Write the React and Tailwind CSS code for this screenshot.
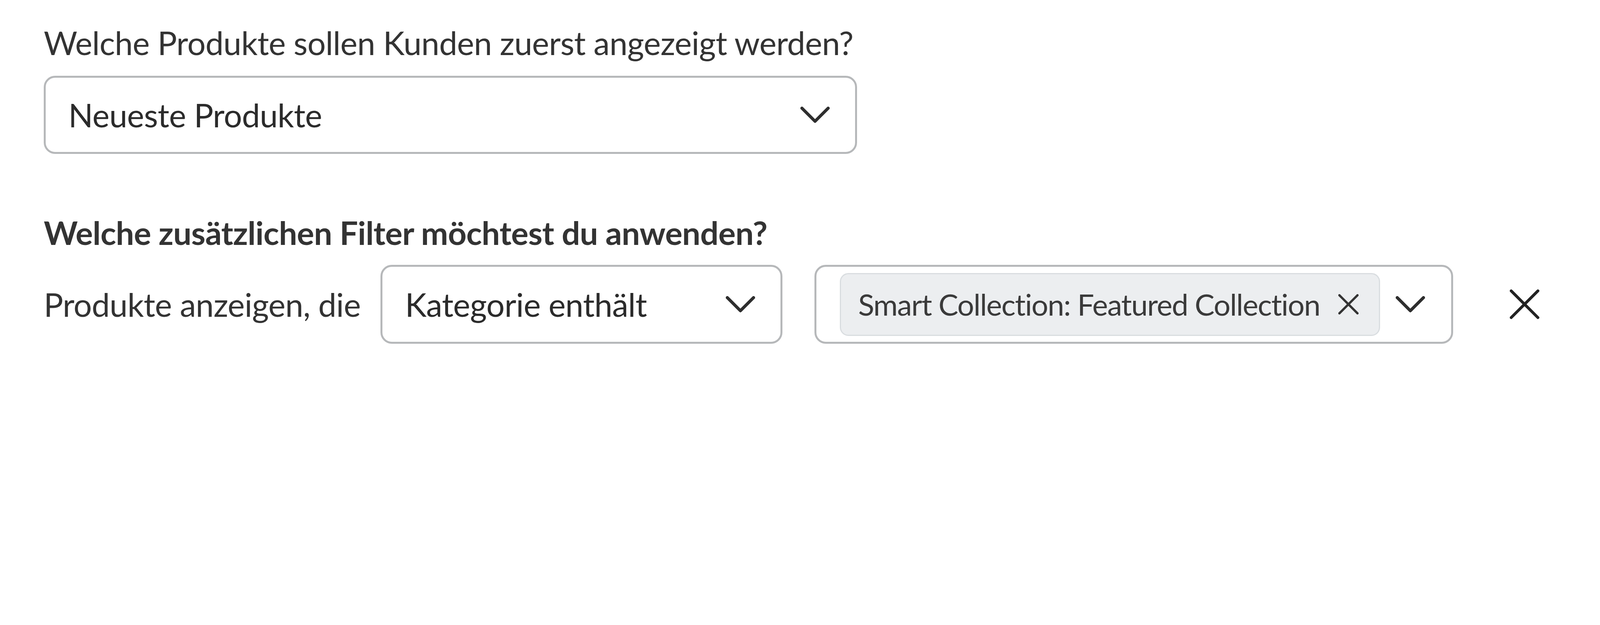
import React from "react";

function Chevron() {
  return (
    <svg width="75" height="41.5" viewBox="0 0 123 68" className="shrink-0">
      <polyline
        points="6.5,6.5 61.5,61.5 116.5,6.5"
        fill="none"
        stroke="#2e2e2e"
        strokeWidth="13"
        strokeLinecap="round"
        strokeLinejoin="round"
      />
    </svg>
  );
}

function Cross({ size, box, stroke, color }) {
  const a = stroke / 2;
  const b = box - stroke / 2;
  return (
    <svg width={size} height={size} viewBox={`0 0 ${box} ${box}`} className="shrink-0">
      <line x1={a} y1={a} x2={b} y2={b} stroke={color} strokeWidth={stroke} strokeLinecap="round" />
      <line x1={b} y1={a} x2={a} y2={b} stroke={color} strokeWidth={stroke} strokeLinecap="round" />
    </svg>
  );
}

export default function App() {
  return (
    <div className="min-h-screen w-full bg-white text-[#333333] pl-[112px] pt-[59px] font-['Lato','Noto_Sans',sans-serif]">
      <div className="text-[83px] leading-[100px] tracking-[-0.64px] whitespace-nowrap">
        Welche Produkte sollen Kunden zuerst angezeigt werden?
      </div>

      <div className="mt-[35px] w-[2082px] h-[200px] border-[5.5px] border-[#b6b8ba] rounded-[29px] bg-white flex items-center pl-[58px] pr-[65px]">
        <span className="flex-1 text-[83px] leading-none tracking-[-0.64px] text-[#2b2b2b] whitespace-nowrap">Neueste Produkte</span>
        <Chevron />
      </div>

      <div className="mt-[151px] text-[83px] leading-[100px] tracking-[-0.64px] font-bold text-[#333333] whitespace-nowrap">
        Welche zusätzlichen Filter möchtest du anwenden?
      </div>

      <div className="mt-[33px] flex items-center h-[202px]">
        <div className="w-[862px] shrink-0 text-[83px] leading-none tracking-[-0.64px] whitespace-nowrap">
          Produkte anzeigen, die
        </div>

        <div className="w-[1029px] h-[202px] shrink-0 border-[5.5px] border-[#b6b8ba] rounded-[29px] bg-white flex items-center pl-[58px] pr-[65px]">
          <span className="flex-1 text-[83px] leading-none tracking-[-0.64px] text-[#2b2b2b] whitespace-nowrap">Kategorie enthält</span>
          <Chevron />
        </div>

        <div className="ml-[82px] w-[1635px] h-[202px] shrink-0 border-[5.5px] border-[#b6b8ba] rounded-[29px] bg-white flex items-center pl-[60px] pr-[67px]">
          <div className="h-[161px] flex items-center gap-[47px] pl-[44px] pr-[52px] bg-[#eceef0] border-[3px] border-[#d9dde0] rounded-[22px]">
            <span className="text-[76px] leading-none tracking-[-1.6px] text-[#3a3a3a] whitespace-nowrap">
              Smart Collection: Featured Collection
            </span>
            <Cross size={52} box={91} stroke={10} color="#333333" />
          </div>
          <div className="flex-1" />
          <Chevron />
        </div>

        <div className="ml-[145px] shrink-0">
          <Cross size={75.7} box={124} stroke={12} color="#222222" />
        </div>
      </div>
    </div>
  );
}
